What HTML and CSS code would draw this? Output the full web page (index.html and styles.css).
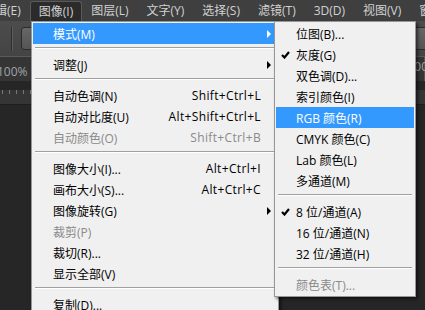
FILE: index.html
```html
<!DOCTYPE html>
<html>
<head>
    <title>图像菜单</title>
    <link rel="stylesheet" href="styles.css">
</head>
<body>
    <div class="menubar">
        <div class="top-item first">编辑(E)</div>
        <div class="top-item active">图像(I)</div>
        <div class="top-item">图层(L)</div>
        <div class="top-item">文字(Y)</div>
        <div class="top-item">选择(S)</div>
        <div class="top-item">滤镜(T)</div>
        <div class="top-item">3D(D)</div>
        <div class="top-item">视图(V)</div>
        <div class="top-item">窗口(W)</div>
    </div>
    <div class="options">
        <div class="divider"></div>
        <div class="tool-btn"></div>
        <div class="spacer"></div>
        <div class="tool-btn right"></div>
    </div>
    <div class="docbar">
        <span class="zoom">100%</span>
        <span class="zoom right">100%</span>
    </div>
    <div class="ruler">
        <div class="ticks"></div>
    </div>

    <!-- image menu -->
    <div class="menu main">
        <div class="item sub hl"><span class="label">模式(M)</span><span class="arrow"></span></div>
        <div class="sep"></div>
        <div class="item sub"><span class="label">调整(J)</span><span class="arrow"></span></div>
        <div class="sep"></div>
        <div class="item"><span class="label">自动色调(N)</span><span class="key">Shift+Ctrl+L</span></div>
        <div class="item"><span class="label">自动对比度(U)</span><span class="key">Alt+Shift+Ctrl+L</span></div>
        <div class="item off"><span class="label">自动颜色(O)</span><span class="key">Shift+Ctrl+B</span></div>
        <div class="sep"></div>
        <div class="item"><span class="label">图像大小(I)...</span><span class="key">Alt+Ctrl+I</span></div>
        <div class="item"><span class="label">画布大小(S)...</span><span class="key">Alt+Ctrl+C</span></div>
        <div class="item sub"><span class="label">图像旋转(G)</span><span class="arrow"></span></div>
        <div class="item off"><span class="label">裁剪(P)</span></div>
        <div class="item"><span class="label">裁切(R)...</span></div>
        <div class="item"><span class="label">显示全部(V)</span></div>
        <div class="sep"></div>
        <div class="item"><span class="label">复制(D)...</span></div>
    </div>

    <!-- mode submenu -->
    <div class="menu submenu">
        <div class="item"><span class="label">位图(B)...</span></div>
        <div class="item"><span class="check"><svg width="9" height="8" viewBox="0 0 9 8"><path d="M1 4 L3.5 6.5 L8 1" fill="none" stroke="#000" stroke-width="2.2"/></svg></span><span class="label">灰度(G)</span></div>
        <div class="item"><span class="label">双色调(D)...</span></div>
        <div class="item"><span class="label">索引颜色(I)</span></div>
        <div class="item hl"><span class="label">RGB 颜色(R)</span></div>
        <div class="item"><span class="label">CMYK 颜色(C)</span></div>
        <div class="item"><span class="label">Lab 颜色(L)</span></div>
        <div class="item"><span class="label">多通道(M)</span></div>
        <div class="sep"></div>
        <div class="item"><span class="check"><svg width="9" height="8" viewBox="0 0 9 8"><path d="M1 4 L3.5 6.5 L8 1" fill="none" stroke="#000" stroke-width="2.2"/></svg></span><span class="label">8 位/通道(A)</span></div>
        <div class="item"><span class="label">16 位/通道(N)</span></div>
        <div class="item"><span class="label">32 位/通道(H)</span></div>
        <div class="sep"></div>
        <div class="item off"><span class="label">颜色表(T)...</span></div>
    </div>
</body>
</html>
```

FILE: styles.css
```css
body {
    margin: 0;
    width: 425px;
    height: 310px;
    overflow: hidden;
    position: relative;
    background: #262626;
    font-family: "Open Sans", "Noto Sans CJK SC", sans-serif;
    font-size: 12px;
}

/* top bar */
.menubar {
    display: flex;
    height: 21px;
    background: #3f3f3f;
    color: #d2d2d2;
    white-space: nowrap;
}
.top-item {
    padding: 0 9px;
    line-height: 20px;
    margin-top: 1px;
    flex: none;
}
.top-item.first { margin-left: -26px; }
.top-item.active {
    background: #2b2b2b;
    border: 1px solid #5a5a5a;
    border-bottom: none;
    border-radius: 3px 3px 0 0;
    padding: 0 8px;
    line-height: 19px;
}

.options {
    display: flex;
    height: 36px;
    background: linear-gradient(#4c4c4c, #444);
    border-bottom: 1px solid #5a5a5a;
    box-sizing: border-box;
    align-items: center;
}
.divider {
    width: 1px;
    height: 24px;
    margin-left: 11px;
    background: #2e2e2e;
    border-right: 1px solid #5e5e5e;
}
.tool-btn {
    width: 40px;
    height: 21px;
    margin-left: 8px;
    border: 1px solid #2c2c2c;
    border-radius: 3px;
    background: linear-gradient(#666, #555);
}
.spacer { flex: 1; }
.tool-btn.right { margin-right: -30px; }

.docbar {
    height: 24px;
    background: #353535;
    color: #9fa3a8;
    display: flex;
    justify-content: space-between;
    align-items: center;
    border-right: 1px solid #555;
}
.zoom { margin-left: -3px; margin-top: 4px; }
.zoom.right { margin-right: -14px; margin-top: -6px; }

.ruler {
    height: 14px;
    background: #353535;
    border-bottom: 1px solid #1e1e1e;
}
.ticks {
    height: 4px;
    margin-top: 9px;
    width: 31px;
    border-right: 1px solid #777;
    background: repeating-linear-gradient(90deg, #777 0 1px, transparent 1px 7px);
    background-position: 2px 0;
}

/* dropdown menus */
.menu {
    position: absolute;
    top: 21px;
    background: #f0f0f0;
    border: 1px solid #979797;
    padding: 1px 0;
    color: #000;
    box-shadow: 2px 2px 3px rgba(0, 0, 0, 0.55);
    white-space: nowrap;
}
.main {
    left: 31px;
    width: 246px;
    height: 300px;
}
.submenu {
    left: 274px;
    width: 140px;
}
.item {
    position: relative;
    display: flex;
    align-items: center;
    height: 21px;
    margin: 0 1px;
    padding: 0 16px 0 20px;
}
.item.sub { padding-right: 6px; }
.label { flex: 1; }
.key {
    text-align: right;
    letter-spacing: 0.35px;
}
.item.off { color: #8a8a8a; }
.item.hl {
    background: #3399ff;
    color: #fff;
}
.arrow {
    width: 0;
    height: 0;
    border-left: 4px solid #000;
    border-top: 4px solid transparent;
    border-bottom: 4px solid transparent;
}
.item.hl .arrow { border-left-color: #fff; }
.check {
    position: absolute;
    left: 5px;
    top: 7px;
    line-height: 0;
}
.sep {
    margin: 3px 3px 5px 3px;
    border-top: 1px solid #a0a0a0;
    border-bottom: 1px solid #fff;
}
```
